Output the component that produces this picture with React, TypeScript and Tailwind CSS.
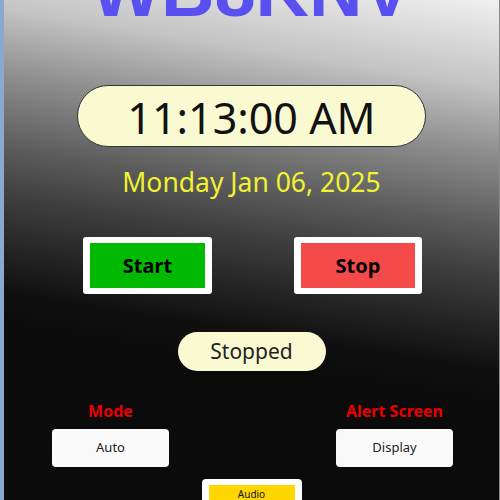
export default function App() {
  return (
    <div className="w-[500px] h-[500px] flex overflow-hidden font-['Noto_Sans',sans-serif]">
      {/* window edge */}
      <div className="w-[4px] shrink-0 bg-[#89aacb]" />

      <div className="flex-1 flex flex-col overflow-hidden border-r border-[#8a8a8a] bg-[linear-gradient(189deg,#f0f0f0_0%,#c4c4c4_15%,#8c8c8c_27%,#5c5c5c_39%,#404040_47%,#262626_56%,#101010_64%,#0b0b0b_70%,#0b0b0b_100%)]">
        {/* Call sign */}
        <h1 className="shrink-0 -mt-[46px] text-center text-[74px] leading-none font-bold text-[#5a50f0] font-['Liberation_Sans',Arial,sans-serif]">
          WB8KNV
        </h1>

        {/* Clock */}
        <div className="shrink-0 mt-[57px] mx-auto w-[349px] h-[62px] rounded-full border border-[#333] bg-[#fafad2] flex items-center justify-center pt-[3px]">
          <span className="text-[43px] leading-none text-[#111]">11:13:00 AM</span>
        </div>

        {/* Date */}
        <p className="shrink-0 mt-[17px] text-center text-[26.5px] leading-[36px] text-[#f2f230]">
          Monday Jan 06, 2025
        </p>

        {/* Start / Stop */}
        <div className="shrink-0 mt-[37px] flex justify-between pl-[79px] pr-[77px]">
          <button className="w-[129px] h-[57px] rounded-[3px] border-x-[7px] border-y-[6px] border-white bg-[#00b900] text-[20px] font-bold text-black">
            Start
          </button>
          <button className="w-[128px] h-[57px] rounded-[3px] border-x-[7px] border-y-[6px] border-white bg-[#f54a4a] text-[20px] font-bold text-black">
            Stop
          </button>
        </div>

        {/* Status */}
        <div className="shrink-0 mt-[38px] mx-auto w-[148px] h-[39px] rounded-full bg-[#fafad2] flex items-center justify-center">
          <span className="text-[21px] leading-none text-[#222]">Stopped</span>
        </div>

        {/* Mode / Alert screen */}
        <div className="shrink-0 mt-[30px] flex justify-between pl-[48px] pr-[46px]">
          <div className="w-[117px] flex flex-col items-center">
            <span className="text-[16px] leading-[20px] font-bold text-[#e80000]">Mode</span>
            <button className="mt-[8px] w-full h-[38px] rounded-[4px] bg-[#fafafa] text-[13px] text-[#222]">
              Auto
            </button>
          </div>
          <div className="w-[117px] flex flex-col items-center">
            <span className="text-[16px] leading-[20px] font-bold text-[#e80000] whitespace-nowrap">
              Alert Screen
            </span>
            <button className="mt-[8px] w-full h-[38px] rounded-[4px] bg-[#fafafa] text-[13px] text-[#222]">
              Display
            </button>
          </div>
        </div>

        {/* Audio */}
        <div className="shrink-0 mt-[12px] mx-auto w-[100px] h-[40px] rounded-[4px] bg-white px-[7px] pt-[6px]">
          <div className="h-[24px] bg-[#ffd600] text-center text-[10px] leading-[18px] text-[#111]">Audio</div>
        </div>
      </div>
    </div>
  )
}
